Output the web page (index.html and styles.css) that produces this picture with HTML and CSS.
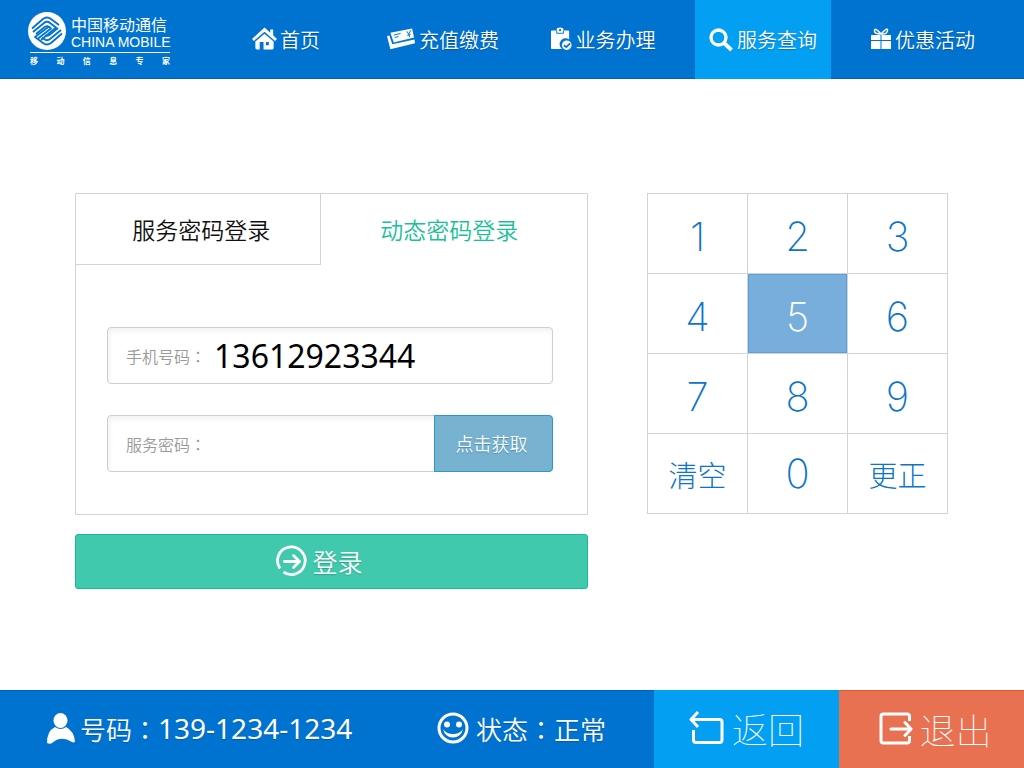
FILE: index.html
```html
<!DOCTYPE html>
<html lang="zh-CN">
<head>
    <meta charset="UTF-8">
    <title>服务查询 - 登录</title>
    <link rel="stylesheet" href="styles.css">
</head>
<body>
    <header class="header">
        <a href="#" class="logo">
            <span class="logo-top">
                <svg class="logo-mark" viewBox="0 0 38 38">
                    <circle cx="19" cy="19" r="19" fill="#fff"/>
                    <g fill="none" stroke="#0073d0" stroke-width="1.800" stroke-linejoin="round">
                        <path d="M4 16.500L15 7Q19 4 23 7L31 13"/>
                        <path d="M5 20L16 11Q19 8.500 22 11L28 15.500L13 28"/>
                        <path d="M8 22L17 14.800Q19 13.500 21 14.800L23 16.500L10 26.500"/>
                        <path d="M34 21.500L23 31Q19 34 15 31L7 25L21 14.500"/>
                        <path d="M33 18L22 27Q19 29.500 16 27L14 25.500"/>
                        <path d="M30 16L21 23.200Q19 24.500 17 23.200"/>
                    </g>
                </svg>
                <span class="logo-name">
                    <span class="logo-cn">中国移动通信</span>
                    <span class="logo-en">CHINA MOBILE</span>
                </span>
            </span>
            <span class="logo-slogan"><i>移</i><i>动</i><i>信</i><i>息</i><i>专</i><i>家</i></span>
        </a>
        <nav class="nav">
            <a href="#" class="nav-item home">
                <svg width="25" height="24" viewBox="0 0 26 24" fill="#fff">
                    <path d="M13 0L0 12l2 2L13 4.500 24 14l2-2-4-4V2h-3v3.500z"/>
                    <path d="M13 6.500L3.500 14.500V21q0 2 2 2H8v-8h4v8h8.500q2 0 2-2v-6.500zM14.500 15h3v3.500h-3z" fill-rule="evenodd"/>
                </svg>
                <span>首页</span>
            </a>
            <a href="#" class="nav-item">
                <svg width="28" height="22" viewBox="0 0 29 22">
                    <path fill="#fff" d="M3.500 4.500L26 0l2 9.500L7 14.500z"/>
                    <path fill="#fff" d="M0 8l2.500-.5L5.500 16.500 28.500 11.500l.5 4L3.500 21.500z"/>
                    <path fill="none" stroke="#0073d0" d="M7 7l7-1.700M8 9.500l4-1M20.500 3l2 3 2-4M22.500 6l1 3M21 7.200l3.500-1"/>
                </svg>
                <span>充值缴费</span>
            </a>
            <a href="#" class="nav-item">
                <svg width="21" height="24" viewBox="0 0 22 24">
                    <path fill="#fff" d="M1 3h5V2q0-2 3.500-2T13 2v1h5q1 0 1 1v8.500a5.800 5.800 0 0 0-7.500 10H1q-1 0-1-1V4q0-1 1-1z"/>
                    <path fill="none" stroke="#0073d0" d="M6 3v3h7V3"/>
                    <circle cx="9.500" cy="2.800" r="1.200" fill="#0073d0"/>
                    <circle cx="16.500" cy="18.500" r="5" fill="#fff"/>
                    <path fill="none" stroke="#0073d0" stroke-width="1.800" d="M13.500 18.500l2.500 2 4-4"/>
                </svg>
                <span>业务办理</span>
            </a>
            <a href="#" class="nav-item active">
                <svg width="24" height="24" viewBox="0 0 24 24" fill="none" stroke="#fff">
                    <circle cx="9.500" cy="9.500" r="7.500" stroke-width="3.300"/>
                    <path stroke-width="3.800" d="M15 15l7.500 7"/>
                </svg>
                <span>服务查询</span>
            </a>
            <a href="#" class="nav-item">
                <svg width="20" height="22" viewBox="0 0 20 22">
                    <path fill="#fff" d="M0 7h9.500v5H0zM10.500 7H20v5h-9.500zM0 13h9.500v8H0zM10.500 13H20v8h-9.500z"/>
                    <path fill="none" stroke="#fff" stroke-width="1.500" d="M10 6Q3 6 3.500 2.500T10 6Q16 6.500 16.500 2.500T10 6"/>
                </svg>
                <span>优惠活动</span>
            </a>
        </nav>
    </header>

    <main class="main">
        <form class="login">
            <div class="panel">
                <div class="tabs">
                    <button type="button" class="tab">服务密码登录</button>
                    <button type="button" class="tab current">动态密码登录</button>
                </div>
                <div class="fields">
                    <div class="field">
                        <label for="phone">手机号码<span class="colon" lang="zh-TW">：</span></label>
                        <input type="text" id="phone" value="13612923344">
                    </div>
                    <div class="field">
                        <label for="code">服务密码<span class="colon" lang="zh-TW">：</span></label>
                        <input type="text" id="code">
                        <button type="button" class="get-code">点击获取</button>
                    </div>
                </div>
            </div>
            <button type="submit" class="submit">
                <svg width="32" height="32" viewBox="0 0 32 32" fill="none" stroke="#fff" stroke-width="2.800">
                    <path d="M4 23.500A13.800 13.800 0 1 1 7.500 27"/>
                    <path stroke-linecap="round" stroke-linejoin="round" d="M8.500 16.500h15M17.500 10.500l6 6-6 6"/>
                </svg>
                <span>登录</span>
            </button>
        </form>

        <div class="keypad">
            <button type="button">1</button>
            <button type="button">2</button>
            <button type="button">3</button>
            <button type="button">4</button>
            <button type="button" class="pressed">5</button>
            <button type="button">6</button>
            <button type="button">7</button>
            <button type="button">8</button>
            <button type="button">9</button>
            <button type="button" class="word">清空</button>
            <button type="button" class="zero">0</button>
            <button type="button" class="word">更正</button>
        </div>
    </main>

    <footer class="footer">
        <div class="info number">
            <svg width="28" height="31" viewBox="0 0 28 31" fill="#fff">
                <ellipse cx="13.500" cy="7.500" rx="7" ry="7.500"/>
                <path d="M8 14q5.500 4 11 0 8 4 9 14.500-1.500 1.500-3 .5-11-7-20 1-2 1.500-5 0Q0 18 8 14z"/>
            </svg>
            <span>号码<span class="colon" lang="zh-TW">：</span></span>
            <span class="digits">139-1234-1234</span>
        </div>
        <div class="info">
            <svg width="32" height="32" viewBox="0 0 32 32" fill="none" stroke="#fff">
                <circle cx="16" cy="16" r="14" stroke-width="3"/>
                <circle cx="10" cy="12.500" r="3" fill="#fff" stroke="none"/>
                <circle cx="22" cy="12.500" r="3" fill="#fff" stroke="none"/>
                <path fill="#fff" stroke="none" d="M6 17q3 5 10 5t10-5q-2 8.500-10 8.500T6 17z"/>
            </svg>
            <span>状态<span class="colon" lang="zh-TW">：</span>正常</span>
        </div>
        <button type="button" class="action back">
            <svg width="35" height="34" viewBox="0 0 35 34" fill="none" stroke="#fff" stroke-width="3" stroke-linejoin="round">
                <path d="M4.500 19v10q0 2.500 2.500 2.500h23.500q2.500 0 2.500-2.500V11q0-2.500-2.500-2.500H3"/>
                <path d="M9 1L2 8.500 9 16"/>
            </svg>
            <span>返回</span>
        </button>
        <button type="button" class="action exit">
            <svg width="34" height="33" viewBox="0 0 34 33" fill="none" stroke="#fff" stroke-width="3" stroke-linejoin="round">
                <path d="M30.500 9V4.500q0-2.500-2.500-2.500H4.500Q2 2 2 4.500v24Q2 31 4.500 31H28q2.500 0 2.500-2.500V24"/>
                <path stroke-linecap="round" d="M12 17h19.500M26 10.500l6 6.500-6 6.500"/>
            </svg>
            <span>退出</span>
        </button>
    </footer>
</body>
</html>
```

FILE: styles.css
```css
* {
    box-sizing: border-box;
}

body {
    margin: 0;
    min-height: 100vh;
    display: flex;
    flex-direction: column;
    background: #fff;
    font-family: "Noto Sans CJK SC", sans-serif;
    font-weight: 350;
}

a {
    color: inherit;
    text-decoration: none;
}

button,
input {
    margin: 0;
    padding: 0;
    border: none;
    font: inherit;
}

button {
    cursor: pointer;
}

svg {
    flex: none;
}

.colon {
    font-family: "Noto Sans CJK TC", sans-serif;
}

/* 顶部导航 */
.header {
    display: flex;
    justify-content: space-between;
    height: 79px;
    padding: 0 33px 0 28px;
    background: #0073d0;
    border-bottom: 1px solid #005fc4;
    color: #fff;
}

.logo {
    width: 142px;
    padding-top: 12px;
}

.logo-top {
    display: flex;
    gap: 5px;
    height: 40px;
}

.logo-mark {
    width: 38px;
    height: 38px;
}

.logo-name {
    display: flex;
    flex-direction: column;
    padding-top: 3px;
    white-space: nowrap;
}

.logo-cn {
    font-size: 16px;
    line-height: 18px;
    font-weight: 400;
}

.logo-en {
    font-family: "Liberation Sans", sans-serif;
    font-size: 14px;
    line-height: 18px;
}

.logo-slogan {
    display: flex;
    justify-content: space-between;
    margin-left: 2px;
    padding-top: 2px;
    border-top: 1px solid #fff;
    font-size: 8px;
    line-height: 12px;
    font-weight: 700;
}

.logo-slogan i {
    font-style: normal;
}

.nav {
    display: flex;
    gap: 24px;
}

.nav-item {
    display: flex;
    align-items: center;
    justify-content: center;
    gap: 4px;
    width: 136px;
    font-size: 20px;
    text-shadow: 0 1px 1px rgba(0, 0, 0, .25);
}

.nav-item.home {
    gap: 3px;
    padding-left: 6px;
}

.nav-item.active {
    height: 79px;
    background: #029ff3;
}

/* 登录区 */
.main {
    display: flex;
    align-items: flex-start;
    gap: 59px;
    padding: 114px 76px 60px 75px;
}

.login {
    flex: 1;
    min-width: 0;
}

.panel {
    border: 1px solid #d3d3d3;
    border-radius: 1px;
}

.tabs {
    display: flex;
}

.tab {
    width: 48%;
    height: 71px;
    padding: 0 0 1px 6px;
    background: none;
    font-size: 23px;
    color: #111;
    border-right: 1px solid #d3d3d3;
    border-bottom: 1px solid #d3d3d3;
}

.tab.current {
    width: 52%;
    padding: 0 10px 2px 0;
    border: none;
    color: #1bbf98;
}

.fields {
    display: flex;
    flex-direction: column;
    gap: 31px;
    padding: 62px 34px 42px 31px;
}

.field {
    display: flex;
    align-items: center;
    height: 57px;
    padding-left: 18px;
    border: 1px solid #cdcdda;
    border-radius: 4px;
    box-shadow: inset 1px 3px 5px rgba(0, 0, 50, .06);
}

.field label {
    flex: none;
    font-size: 16px;
    color: #999;
}

.field input {
    flex: 1;
    min-width: 0;
    height: 55px;
    padding-left: 8px;
    background: none;
    outline: none;
    font-family: "Noto Sans", sans-serif;
    font-size: 32px;
    font-weight: 400;
    color: #000;
}

.get-code {
    flex: none;
    width: 119px;
    height: 57px;
    margin-right: -1px;
    padding: 0 4px 2px 0;
    background: #78b2d1;
    border: 1px solid #2c97c8;
    border-radius: 0 4px 4px 0;
    color: #fff;
    font-size: 18px;
    text-shadow: 0 1px 1px rgba(0, 80, 130, .4);
}

.submit {
    display: flex;
    align-items: center;
    justify-content: center;
    gap: 4px;
    width: 100%;
    height: 55px;
    margin-top: 19px;
    padding: 0 24px 2px 0;
    background: #40c9ac;
    border: 1px solid #18b995;
    border-radius: 3px;
    color: #fff;
    font-size: 25px;
    text-shadow: 0 1px 1px rgba(0, 120, 90, .4);
}

/* 数字键盘 */
.keypad {
    flex: none;
    display: grid;
    grid-template-columns: repeat(3, 1fr);
    grid-auto-rows: 79px;
    gap: 1px;
    width: 301px;
    padding: 1px;
    background: #d3d3d3;
}

.keypad button {
    padding-top: 5px;
    background: #fff;
    color: #0d75c8;
    font-family: "Inter", sans-serif;
    font-size: 40px;
    font-weight: 200;
}

.keypad .pressed {
    background: #78aedb;
    border: 1px solid #5a9fd8;
    color: #fff;
}

.keypad .zero {
    padding-top: 0;
}

.keypad .word {
    padding-top: 0;
    font-family: "Noto Sans CJK SC", sans-serif;
    font-size: 29px;
}

/* 底部状态栏 */
.footer {
    display: flex;
    height: 78px;
    margin-top: auto;
    background: #0073d0;
    color: #fff;
}

.info {
    flex: 1;
    display: flex;
    align-items: center;
    gap: 7px;
    padding-bottom: 3px;
    border-top: 1px solid #005fc4;
    font-size: 26px;
    text-shadow: 0 1px 1px rgba(0, 0, 0, .2);
    white-space: nowrap;
}

.info.number {
    flex: 0 0 437px;
    gap: 5px;
    padding-left: 47px;
}

.digits {
    margin-left: -5px;
    font-family: "Noto Sans", sans-serif;
    font-size: 28px;
    font-weight: 400;
}

.action {
    display: flex;
    align-items: center;
    justify-content: center;
    gap: 8px;
    width: 185px;
    padding-bottom: 2px;
    color: #fff;
    font-size: 36px;
    font-weight: 100;
}

.back {
    background: #029ff3;
}

.exit {
    gap: 6px;
    padding-left: 8px;
    background: #e77150;
    border-top: 1px solid #e25530;
}
```
